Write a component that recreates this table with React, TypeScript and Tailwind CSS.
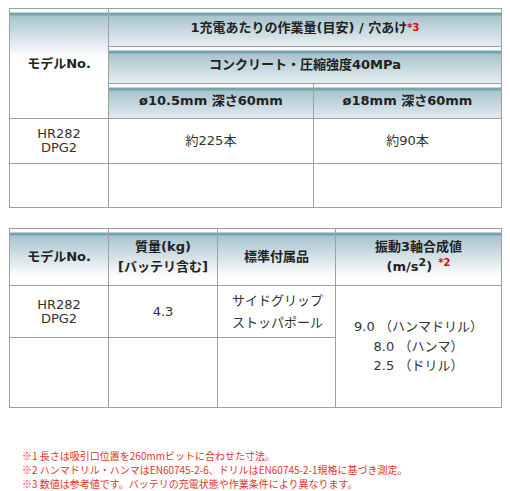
import React from "react";

const th =
  "border border-[#a0a0a0] bg-[linear-gradient(180deg,#fff_0px,#fff_3px,#76a3b1_3px,#76a3b1_6px,#a7c3cd_6px,#ffffff_48px)] font-bold text-[#222] text-center align-middle p-0";
const td = "border border-[#a0a0a0] text-[#333] text-center align-middle p-0";

export default function App() {
  return (
    <div className="w-[510px] h-[491px] bg-white font-['DejaVu_Sans','Noto_Sans_CJK_JP',sans-serif] text-[13px] overflow-hidden">
      <div className="pt-[8px] pl-[9px]">
        <table className="w-[492px] table-fixed border-collapse">
          <colgroup>
            <col className="w-[99px]" />
            <col className="w-[205px]" />
            <col className="w-[188px]" />
          </colgroup>
          <tbody>
            <tr className="h-[38px]">
              <th rowSpan={3} className={th}>
                モデルNo.
              </th>
              <th colSpan={2} className={th}>
                1充電あたりの作業量(目安) / 穴あけ
                <sup className="text-[10px] text-[#e50012] font-bold relative top-[-1px]">*3</sup>
              </th>
            </tr>
            <tr className="h-[37px]">
              <th colSpan={2} className={th}>
                コンクリート・圧縮強度40MPa
              </th>
            </tr>
            <tr className="h-[35px]">
              <th className={th}>ø10.5mm 深さ60mm</th>
              <th className={th}>ø18mm 深さ60mm</th>
            </tr>
            <tr className="h-[45px]">
              <td className={`${td} leading-[14px]`}>
                HR282
                <br />
                DPG2
              </td>
              <td className={td}>約225本</td>
              <td className={td}>約90本</td>
            </tr>
            <tr className="h-[44px]">
              <td className={td}></td>
              <td className={td}></td>
              <td className={td}></td>
            </tr>
          </tbody>
        </table>

        <table className="mt-[20px] w-[492px] table-fixed border-collapse">
          <colgroup>
            <col className="w-[99px]" />
            <col className="w-[109px]" />
            <col className="w-[118px]" />
            <col className="w-[166px]" />
          </colgroup>
          <tbody>
            <tr className="h-[57px]">
              <th className={th}>モデルNo.</th>
              <th className={`${th} leading-[20px]`}>
                質量(kg)
                <br />
                [バッテリ含む]
              </th>
              <th className={th}>標準付属品</th>
              <th className={`${th} leading-[20px]`}>
                振動3軸合成値
                <br />
                (m/s<sup className="text-[11px]">2</sup>)
                <sup className="ml-[6px] text-[10px] text-[#e50012] font-bold">*2</sup>
              </th>
            </tr>
            <tr className="h-[52px]">
              <td className={`${td} leading-[14px]`}>
                HR282
                <br />
                DPG2
              </td>
              <td className={td}>4.3</td>
              <td className={`${td} text-left pl-[14px] leading-[22px]`}>
                サイドグリップ
                <br />
                ストッパポール
              </td>
              <td rowSpan={2} className={`${td} leading-[19.5px]`}>
                9.0 （ハンマドリル）
                <br />
                8.0 （ハンマ）
                <br />
                2.5 （ドリル）
              </td>
            </tr>
            <tr className="h-[70px]">
              <td className={td}></td>
              <td className={td}></td>
              <td className={td}></td>
            </tr>
          </tbody>
        </table>
      </div>
      <div className="mt-[41px] pl-[22px] text-[10px] leading-[14px] text-[#e8322b] font-['Noto_Sans_CJK_JP',sans-serif]">
        <p>※1 長さは吸引口位置を260mmビットに合わせた寸法。</p>
        <p>※2 ハンマドリル・ハンマはEN60745-2-6、ドリルはEN60745-2-1規格に基づき測定。</p>
        <p>※3 数値は参考値です。バッテリの充電状態や作業条件により異なります。</p>
      </div>
    </div>
  );
}
